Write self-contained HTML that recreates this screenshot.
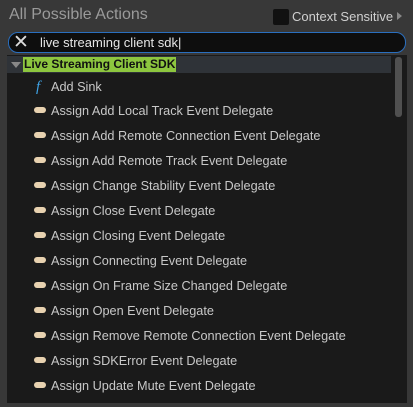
<!DOCTYPE html>
<html><head><style>
*{margin:0;padding:0;box-sizing:border-box}
body{width:413px;height:407px;background:#383838;font-family:"Liberation Sans",sans-serif;position:relative;overflow:hidden;color:#c0c0c0}
.title{position:absolute;left:9px;top:6px;font-size:16px;color:#9a9a9a}
.cb{position:absolute;left:273px;top:9px;width:16px;height:16px;background:#111;border-radius:2px}
.cs{position:absolute;left:292px;top:9px;font-size:13px;color:#d0d0d0}
.tri{position:absolute;left:397px;top:12px;width:0;height:0;border-top:4px solid transparent;border-bottom:4px solid transparent;border-left:5px solid #888}
.search{position:absolute;left:8px;top:32px;width:398px;height:21px;border:1px solid #2a6fbf;border-radius:10px;background:#0e0e0e}
.search .x{position:absolute;left:4px;top:-2px;font-size:19px;color:#ddd}
.search .t{position:absolute;left:31px;top:2px;font-size:13px;color:#e6e6e6}
.panel{position:absolute;left:7px;top:55px;width:400px;height:348px;background:#1a1a1a}
.hdr{position:absolute;left:0;top:1px;width:384px;height:17px;background:#2f3338}
.hdr .ar{position:absolute;left:4px;top:6px;border-left:5px solid transparent;border-right:5px solid transparent;border-top:6px solid #888}
.hdr .lb{position:absolute;left:16px;top:1px;height:15px;padding:0 1px;background:#8dc63f;color:#111;font-weight:bold;font-size:12px;line-height:15px}
.sb{position:absolute;left:388px;top:2px;width:7px;height:60px;background:#505050;border-radius:3px}
.row{position:absolute;left:44px;font-size:12.7px;color:#c8c8c8;margin-top:1px}
.pill{position:absolute;left:27px;width:12px;height:6px;border-radius:3px;background:#e8d2b0}
.fn{position:absolute;left:29px;top:24px;color:#3fa3e6;font-style:italic;font-family:"Liberation Serif",serif;font-size:15px}
</style></head><body>
<div class="title">All Possible Actions</div>
<div class="cb"></div><div class="cs">Context Sensitive</div><div class="tri"></div>
<div class="search"><span class="x">✕</span><span class="t">live streaming client sdk|</span></div>
<div class="panel">
<div class="hdr"><div class="ar"></div><div class="lb">Live Streaming Client SDK</div></div>
<div class="sb"></div>
<div class="fn">f</div><div class="row" style="top:24px">Add Sink</div>
<div class="pill" style="top:52px"></div><div class="row" style="top:48px">Assign Add Local Track Event Delegate</div>
<div class="pill" style="top:77px"></div><div class="row" style="top:73px">Assign Add Remote Connection Event Delegate</div>
<div class="pill" style="top:102px"></div><div class="row" style="top:98px">Assign Add Remote Track Event Delegate</div>
<div class="pill" style="top:127px"></div><div class="row" style="top:123px">Assign Change Stability Event Delegate</div>
<div class="pill" style="top:152px"></div><div class="row" style="top:148px">Assign Close Event Delegate</div>
<div class="pill" style="top:177px"></div><div class="row" style="top:173px">Assign Closing Event Delegate</div>
<div class="pill" style="top:202px"></div><div class="row" style="top:198px">Assign Connecting Event Delegate</div>
<div class="pill" style="top:227px"></div><div class="row" style="top:223px">Assign On Frame Size Changed Delegate</div>
<div class="pill" style="top:252px"></div><div class="row" style="top:248px">Assign Open Event Delegate</div>
<div class="pill" style="top:277px"></div><div class="row" style="top:273px">Assign Remove Remote Connection Event Delegate</div>
<div class="pill" style="top:302px"></div><div class="row" style="top:298px">Assign SDKError Event Delegate</div>
<div class="pill" style="top:327px"></div><div class="row" style="top:323px">Assign Update Mute Event Delegate</div>
</div>
</body></html>
